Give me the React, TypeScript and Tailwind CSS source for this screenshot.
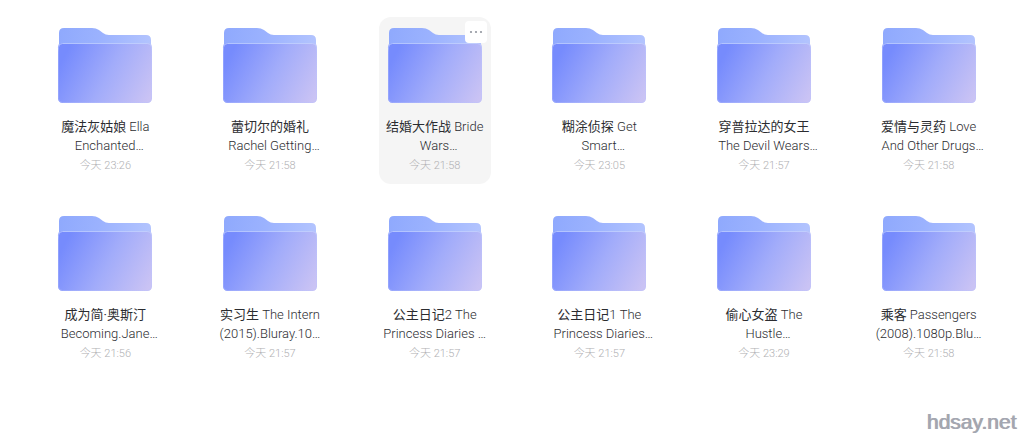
import React from "react";

type Folder = {
  name: string;
  rest?: string;
  second: string;
  time: string;
  active?: boolean;
  full?: boolean;
};

const folders: Folder[] = [
  { name: "魔法灰姑娘", rest: " Ella", second: "Enchanted…", time: "今天 23:26" },
  { name: "蕾切尔的婚礼", second: "Rachel Getting…", time: "今天 21:58" },
  { name: "结婚大作战", rest: " Bride", second: "Wars…", time: "今天 21:58", active: true },
  { name: "糊涂侦探", rest: " Get", second: "Smart…", time: "今天 23:05" },
  { name: "穿普拉达的女王", second: "The Devil Wears…", time: "今天 21:57" },
  { name: "爱情与灵药", rest: " Love", second: "And Other Drugs…", time: "今天 21:58" },
  { name: "成为简·奥斯汀", second: "Becoming.Jane…", time: "今天 21:56" },
  { name: "实习生", rest: " The Intern", second: "(2015).Bluray.10…", time: "今天 21:57", full: true },
  { name: "公主日记", rest: "2 The", second: "Princess Diaries …", time: "今天 21:57", full: true },
  { name: "公主日记", rest: "1 The", second: "Princess Diaries…", time: "今天 21:57" },
  { name: "偷心女盗", rest: " The", second: "Hustle…", time: "今天 23:29" },
  { name: "乘客", rest: " Passengers", second: "(2008).1080p.Blu…", time: "今天 21:58", full: true },
];

function FolderIcon() {
  return (
    <svg className="h-[76px] w-24" viewBox="0 0 96 76" fill="none" aria-hidden="true">
      <path
        d="M2 6Q2 1 7 1H35Q39 1 42 3L46 6Q48.500 8 52 8H89Q94 8 94 13V30H2Z"
        fill="url(#folder-back)"
      />
      <rect x="1" y="16" width="94" height="60" rx="4.500" fill="url(#folder-front)" />
      <rect x="1.500" y="16.500" width="93" height="59" rx="4" stroke="url(#folder-edge)" />
    </svg>
  );
}

function Gradients() {
  return (
    <svg className="absolute size-0" aria-hidden="true">
      <defs>
        <linearGradient id="folder-back" gradientUnits="userSpaceOnUse" x1="2" y1="0" x2="94" y2="16">
          <stop offset="0" stopColor="#8fa9fd" />
          <stop offset="0.450" stopColor="#9bb2fe" />
          <stop offset="1" stopColor="#b3c4fe" />
        </linearGradient>
        <linearGradient id="folder-front" gradientUnits="userSpaceOnUse" x1="8" y1="28" x2="92" y2="72">
          <stop offset="0" stopColor="#768bfd" />
          <stop offset="0.500" stopColor="#a2acfa" />
          <stop offset="1" stopColor="#cac3f4" />
        </linearGradient>
        <linearGradient id="folder-edge" gradientUnits="userSpaceOnUse" x1="0" y1="16" x2="0" y2="76">
          <stop offset="0" stopColor="#c5d5ff" stopOpacity="0.800" />
          <stop offset="0.150" stopColor="#b9c3ff" stopOpacity="0.400" />
          <stop offset="1" stopColor="#b9c3ff" stopOpacity="0.350" />
        </linearGradient>
      </defs>
    </svg>
  );
}

function FolderCard({ name, rest, second, time, active, full }: Folder) {
  return (
    <li className={`relative w-28 rounded-xl ${active ? "bg-[#f5f5f5]" : ""}`}>
      <a href="#" className="flex flex-col items-center pt-2.5 pb-2">
        <FolderIcon />
        <span className="mt-3.5 text-center text-[13px] leading-[19px] whitespace-nowrap text-[#2b2c30]">
          <span className="block">
            <span className="font-normal">{name}</span>
            {rest}
          </span>
          <span className={full ? "block" : "block pl-2"}>{second}</span>
        </span>
        <time className="mt-px text-[11px] leading-5 text-[#b0b0b3]">{time}</time>
      </a>
      {active && (
        <button
          type="button"
          aria-label="更多"
          className="absolute top-1 right-1 flex h-[22px] w-[22px] items-center justify-center rounded bg-white"
        >
          <svg className="h-1 w-3.5" viewBox="0 0 14 4" fill="#92969f" aria-hidden="true">
            <circle cx="2" cy="2" r="1.100" />
            <circle cx="7" cy="2" r="1.100" />
            <circle cx="12" cy="2" r="1.100" />
          </svg>
        </button>
      )}
    </li>
  );
}

export default function App() {
  return (
    <main className="flex min-h-screen flex-col justify-between bg-white pt-[17px] font-['Roboto','Noto_Sans_CJK_SC',sans-serif] font-light">
      <Gradients />
      <ul className="grid grid-cols-6 justify-items-center gap-y-[21px] pr-[13px] pl-[23px]">
        {folders.map((folder) => (
          <FolderCard key={folder.name + folder.rest} {...folder} />
        ))}
      </ul>
      <footer className="self-end pr-2 pb-1.5 font-['Liberation_Sans',sans-serif] text-[21px] leading-6 font-normal text-[#a3a7b4] [text-shadow:1px_0_0_#aaa6a4]">
        hdsay.net
      </footer>
    </main>
  );
}
